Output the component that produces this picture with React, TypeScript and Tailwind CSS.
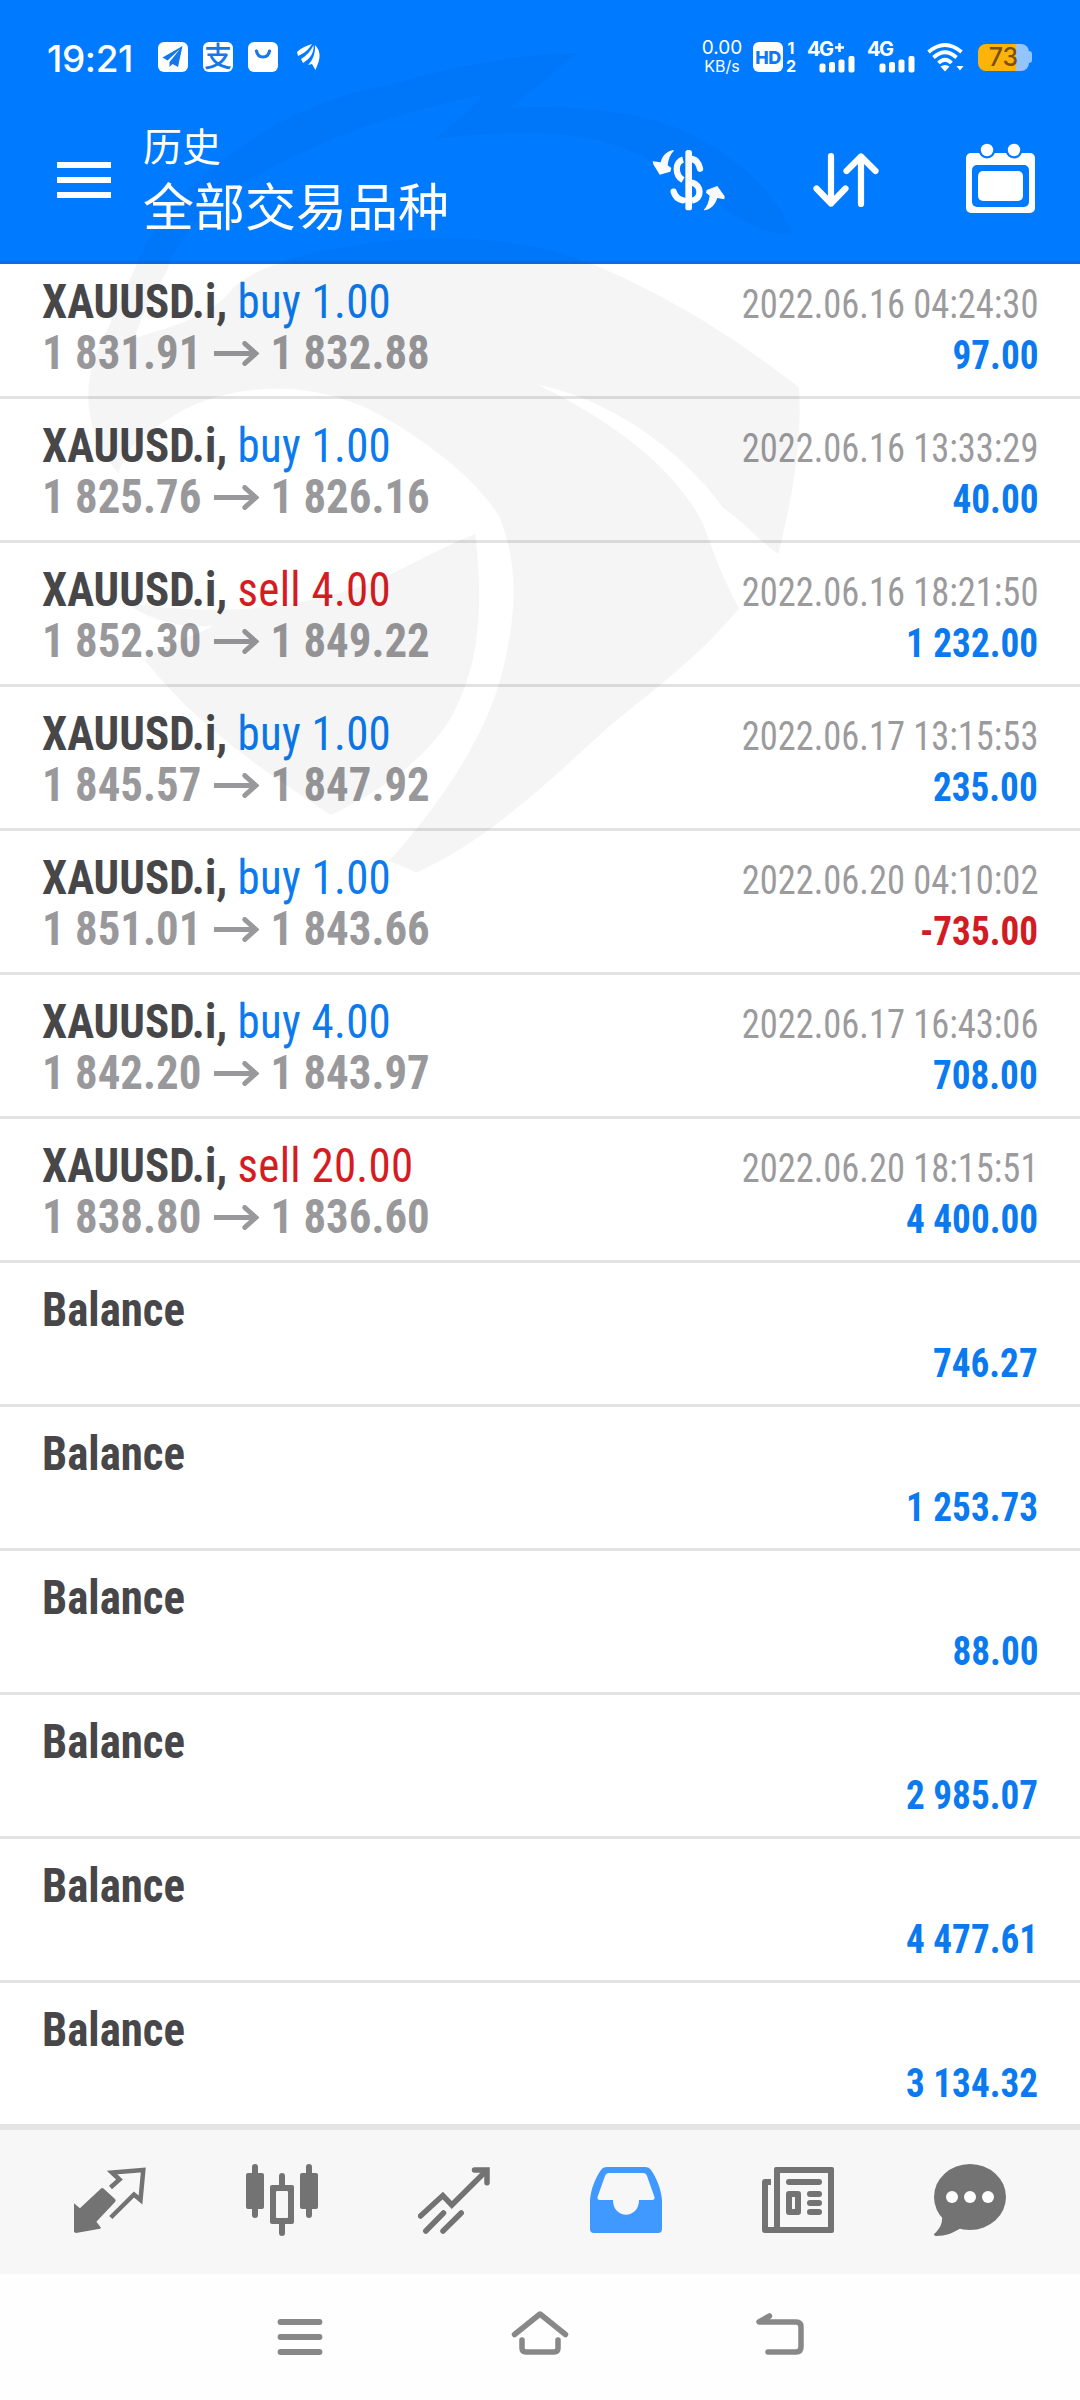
import type { ReactNode } from "react";

interface Deal {
  side: "buy" | "sell";
  volume: string;
  open: string;
  close: string;
  time: string;
  profit: string;
}

const SYMBOL = "XAUUSD.i,";

const deals: Deal[] = [
  { side: "buy", volume: "1.00", open: "1 831.91", close: "1 832.88", time: "2022.06.16 04:24:30", profit: "97.00" },
  { side: "buy", volume: "1.00", open: "1 825.76", close: "1 826.16", time: "2022.06.16 13:33:29", profit: "40.00" },
  { side: "sell", volume: "4.00", open: "1 852.30", close: "1 849.22", time: "2022.06.16 18:21:50", profit: "1 232.00" },
  { side: "buy", volume: "1.00", open: "1 845.57", close: "1 847.92", time: "2022.06.17 13:15:53", profit: "235.00" },
  { side: "buy", volume: "1.00", open: "1 851.01", close: "1 843.66", time: "2022.06.20 04:10:02", profit: "-735.00" },
  { side: "buy", volume: "4.00", open: "1 842.20", close: "1 843.97", time: "2022.06.17 16:43:06", profit: "708.00" },
  { side: "sell", volume: "20.00", open: "1 838.80", close: "1 836.60", time: "2022.06.20 18:15:51", profit: "4 400.00" },
];

const balances = ["746.27", "1 253.73", "88.00", "2 985.07", "4 477.61", "3 134.32"];

function SignalBars() {
  return (
    <svg width="36" height="17" viewBox="0 0 36 17" fill="#fff">
      <rect x="0.5" y="7.5" width="6" height="9" rx="2" />
      <rect x="10" y="6" width="6" height="10.5" rx="2" />
      <rect x="19.5" y="3.5" width="6" height="13" rx="2" />
      <rect x="29.5" y="0" width="6" height="16.5" rx="2" />
    </svg>
  );
}

function StatusBar() {
  return (
    <div className="flex h-[114px] items-center pl-[47px] pr-12 font-['Inter','Noto_Sans_CJK_SC',sans-serif] text-white">
      <span className="mt-1 w-[111px] whitespace-nowrap text-[37px] font-medium leading-[44px] tracking-[-0.4px]">19:21</span>
      <div className="flex items-center gap-[15px]">
        <svg width="30" height="30" viewBox="0 0 30 30">
          <rect width="30" height="30" rx="6" fill="#fff" />
          <path d="M24.5 4 L4.5 15.5 L9.5 18.5 L22 7 L11.5 20 L11.5 25 L14.5 22 L20 25 Z" fill="#1478e8" />
        </svg>
        <span className="flex size-[30px] items-center justify-center rounded-md bg-white text-[28px] font-medium leading-[30px] text-[#1478e8]">
          支
        </span>
        <svg width="30" height="30" viewBox="0 0 30 30">
          <rect width="30" height="30" rx="6" fill="#fff" />
          <path d="M8.5 9 C10 17 20 17 21.5 9" fill="none" stroke="#1478e8" strokeWidth="3.2" strokeLinecap="round" />
        </svg>
        <svg className="ml-1" width="24" height="28" viewBox="0 0 24 28" fill="#fff">
          <path d="M0 9 C4 5 9 3 15 1 C12 6 8 10 1 13 Z" />
          <path d="M4 16 C9 13 14 8 16.5 2 C17.500 9 13 16 6 20 Z" />
          <path d="M11 22 C16 17 18.500 10 18 2 C23 7 23.500 13 21.5 19 L18.500 27 L15 21 Z" />
        </svg>
      </div>

      <div className="ml-auto flex items-center">
        <div className="flex w-[40px] flex-col items-center whitespace-nowrap">
          <span className="text-[19px] leading-[16px]">0.00</span>
          <span className="mt-[2px] text-[16px] leading-[16px]">KB/s</span>
        </div>
        <span className="ml-[11px] flex size-[30px] items-center justify-center rounded-md bg-white text-[18px] font-extrabold tracking-tight text-[#0b79f2]">
          HD
        </span>
        <div className="ml-[2px] flex w-3 flex-col items-center gap-[3px] text-[16px] font-bold leading-[15px]">
          <span>1</span>
          <span>2</span>
        </div>
        <div className="ml-[10px] flex h-[31px] w-[48px] flex-col">
          <span className="flex h-[14px] items-start whitespace-nowrap text-[20px] font-bold leading-[15px] tracking-[-1.5px]">
            4G
            <svg className="ml-[2px] mt-[1px]" width="9" height="9" viewBox="0 0 9 9" stroke="#fff" strokeWidth="2.500">
              <path d="M4.500 0 V9 M0 4.500 H9" />
            </svg>
          </span>
          <div className="self-end">
            <SignalBars />
          </div>
        </div>
        <div className="ml-[12px] flex h-[31px] w-[48px] flex-col">
          <span className="h-[14px] whitespace-nowrap text-[20px] font-bold leading-[15px] tracking-[-1.5px]">4G</span>
          <div className="self-end">
            <SignalBars />
          </div>
        </div>
        <svg className="ml-[12px]" width="37" height="30" viewBox="0 0 37 30">
          <g fill="none" stroke="#fff" strokeWidth="3.800">
            <path d="M1.500 10 Q18 -4 34.500 10" />
            <path d="M6.500 15.500 Q18 5 29.500 15.500" />
            <path d="M11.500 21 Q18 14.500 24.500 21" />
          </g>
          <path d="M13.500 24.500 Q18 21.500 22.500 24.500 L18 29.500 Z" fill="#fff" />
          <path d="M29.500 24 H36.500 L33 28.500 Z" fill="#fff" />
        </svg>
        <div className="ml-[14px] flex items-center">
          <div className="flex h-[27px] w-[51px] items-center justify-center rounded-lg bg-[linear-gradient(90deg,#fdb30a_0_38px,#93c4fc_38px)] text-[25px] font-medium leading-[27px] text-[#7a4f12]">
            73
          </div>
          <span className="h-3 w-[3px] rounded-r bg-[#93c4fc]" />
        </div>
      </div>
    </div>
  );
}

function AppBar() {
  return (
    <div className="flex h-[147px] items-start pl-[57px] pr-[45px]">
      <div className="mt-12 flex w-[54px] flex-col gap-[9px]">
        <span className="h-[6px] bg-white" />
        <span className="h-[6px] bg-white" />
        <span className="h-[6px] bg-white" />
      </div>
      <div className="ml-[32px] flex flex-col whitespace-nowrap font-['Noto_Sans_CJK_SC',sans-serif] font-normal text-white">
        <span className="text-[39px] leading-[60px]">历史</span>
        <span className="text-[51px] leading-[60px]">全部交易品种</span>
      </div>

      <svg className="ml-auto mt-[35px]" width="74" height="62" viewBox="40 56 222 186">
        <g fill="none" stroke="#fff" strokeWidth="19">
          <path d="M133 88 C109 94 107 134 133 149" />
          <path d="M160 86 C173 88 180 98 184 115" strokeLinecap="round" />
          <path d="M160 157 C190 164 190 206 160 211" />
          <path d="M133 210 C116 206 108 196 105 184" strokeLinecap="round" />
        </g>
        <path d="M158 146 L172 156 L158 170 Z" fill="#fff" />
        <rect x="140" y="59" width="20" height="181" rx="8" fill="#fff" />
        <path d="M105 59 C86 62 71 74 66 96 L42 93 L44 102 L63 133 L95 124 L98 113 L87 105 C89 86 95 72 105 62 Z" fill="#fff" />
        <path d="M195 240 C205 228 211 214 213 196 L202 187 L204 179 L236 167 L258 198 L257 207 L236 203 C229 224 216 237 198 240 Z" fill="#fff" />
      </svg>

      <svg className="ml-[86px] mt-[36px]" width="68" height="60" viewBox="0 0 68 60" fill="none" stroke="#fff" strokeWidth="6.200" strokeLinecap="round" strokeLinejoin="round">
        <path d="M19 6 V53.500 M4.500 38.500 L19 53.500 L33.500 38.500" />
        <path d="M49 54 V6.500 M34.500 21 L49 6.500 L63.500 21" />
      </svg>

      <svg className="ml-[86px] mt-[29px]" width="69" height="71" viewBox="0 0 69 71">
        <rect y="10" width="69" height="60" rx="5" fill="#fff" />
        <rect x="6" y="22" width="57" height="42" rx="5" fill="#007aff" />
        <rect x="12" y="28" width="45" height="30" rx="5" fill="#fff" />
        <circle cx="21" cy="7" r="8.500" fill="#007aff" />
        <circle cx="48" cy="7" r="8.500" fill="#007aff" />
        <circle cx="21" cy="7" r="6.200" fill="#fff" />
        <circle cx="48" cy="7" r="6.200" fill="#fff" />
      </svg>
    </div>
  );
}

function Row({ left, time, profit }: { left: ReactNode; time?: string; profit: string }) {
  return (
    <li className="flex h-[144px] shrink-0 justify-between whitespace-nowrap border-b-[3px] border-[#e2e2e2] pl-[42px] pr-[42px]">
      <div className="flex flex-col pt-[21px] text-[48px] leading-[51px]">{left}</div>
      <div className="flex flex-col items-end pt-6 text-[40px] leading-[51px]">
        <span className="h-[51px] origin-right scale-x-[0.912] text-[#9b9b9e]">{time}</span>
        <span
          className={`origin-right scale-x-[0.93] font-bold ${profit.startsWith("-") ? "text-[#d01c22]" : "text-[#0a7aee]"}`}
        >
          {profit}
        </span>
      </div>
    </li>
  );
}

function DealRow({ deal }: { deal: Deal }) {
  return (
    <Row
      time={deal.time}
      profit={deal.profit}
      left={
        <>
          <div className="origin-left scale-x-[0.936]">
            <span className="font-bold text-[#47474a]">{SYMBOL}</span>{" "}
            <span className={`tracking-[0.3px] ${deal.side === "buy" ? "text-[#0a7aee]" : "text-[#d41c22]"}`}>
              {deal.side} {deal.volume}
            </span>
          </div>
          <div className="flex origin-left scale-x-[0.934] items-center font-bold text-[#99999c]">
            <span>{deal.open}</span>
            <svg className="ml-[13px] mr-[12px] mt-[2px]" width="49" height="25" viewBox="0 0 49 25" fill="none" stroke="#99999c" strokeWidth="5">
              <path d="M0 12.500 H45" />
              <path d="M33 2.500 L45 12.500 L33 22.500" strokeLinecap="round" />
            </svg>
            <span>{deal.close}</span>
          </div>
        </>
      }
    />
  );
}

/** Faint bird mark that lies over the header and the first rows. */
function Watermark() {
  return (
    <svg
      className="pointer-events-none absolute left-0 top-0 h-[900px] w-[1080px]"
      viewBox="0 0 1568 1568"
      preserveAspectRatio="none"
      fill="url(#mark)"
    >
      <defs>
        {/* weaker over the blue header than over the list */}
        <linearGradient id="mark" gradientUnits="userSpaceOnUse" x1="0" y1="0" x2="0" y2="1568">
          <stop offset="0.293" stopColor="#000" stopOpacity="0.028" />
          <stop offset="0.293" stopColor="#000" stopOpacity="0.04" />
        </linearGradient>
      </defs>
      <path d="M195 470 C240 330 400 180 560 150 C660 115 750 95 840 92 C800 130 770 160 740 188 C850 180 960 200 1020 245 C1080 285 1130 340 1150 410 C1110 405 1080 390 1050 360 C980 290 900 240 800 232 C740 228 680 235 630 242 C660 215 685 190 700 165 C560 200 420 260 330 340 C285 380 255 420 243 470 C225 510 205 550 195 590 C240 570 300 560 340 500 C370 470 400 460 440 445 C580 405 740 400 860 460 C980 520 1080 600 1160 675 C1165 770 1150 870 1130 965 C1100 940 1085 915 1050 885 C1000 800 900 700 780 670 C900 740 980 820 1020 910 C1035 960 1050 1010 1073 1060 C1010 1150 950 1200 880 1270 C790 1370 700 1470 605 1520 L565 1500 C640 1400 700 1290 725 1190 C750 1080 755 990 725 900 C690 830 600 750 530 710 C430 655 310 675 245 730 C195 765 180 790 172 825 C110 740 125 640 150 590 Z" />
      <path d="M690 930 C705 1080 690 1180 650 1260 C610 1330 550 1380 480 1420 C380 1340 290 1270 210 1150 C240 1120 280 1110 310 1090 C240 1095 210 1070 180 1050 C350 1080 470 1050 560 1005 C610 975 650 950 690 930 Z" />
    </svg>
  );
}

function TabBar() {
  return (
    <nav className="grid h-[150px] grid-cols-6 border-t-[6px] border-[#e4e4e4] bg-[#f7f7f7] px-6">
      {/* quotes */}
      <svg className="mx-auto mt-[34px] size-[72px]" viewBox="0 0 72 72">
        <path d="M0 39.300 L5.900 44.300 L26.500 25 Q28.300 23.200 30 25 L41 35 Q42.500 36.500 41 38 L22.400 57.700 L27 63.700 L26 64.800 L2 69 L0 68 Z" fill="#737373" />
        <path d="M36.500 23.500 L45.500 15.500 L38 8.500 L69.300 6 L66.500 36 L60 30.500 L36.800 53.500" fill="none" stroke="#737373" strokeWidth="4.500" />
      </svg>
      {/* chart */}
      <svg className="mx-auto mt-[34px] size-[72px]" viewBox="0 0 72 72" fill="#737373">
        <rect x="6" width="6" height="54" rx="3" />
        <rect y="9" width="18" height="36" rx="2" />
        <rect x="33" y="9" width="6" height="63" rx="3" />
        <rect x="24" y="21" width="24" height="39" rx="2" />
        <rect x="30" y="27" width="12" height="27" rx="1" fill="#f7f7f7" />
        <rect x="60" width="6" height="54" rx="3" />
        <rect x="54" y="9" width="18" height="36" rx="2" />
      </svg>
      {/* trade */}
      <svg className="mx-auto mt-[34px] size-[72px]" viewBox="0 0 72 72" fill="none" stroke="#737373" strokeWidth="5.500" strokeLinecap="round">
        <path d="M2.500 52 L24.800 31.500 L33.800 41 L68 7" />
        <path d="M56.500 6 H69 V18.700" />
        <path d="M7.800 67 L25.500 49 M25 67 L43.200 49" />
      </svg>
      {/* history, active */}
      <svg className="mx-auto mt-[34px] size-[72px]" viewBox="0 0 72 72">
        <path
          fillRule="evenodd"
          fill="#4099ff"
          d="M0 36 C1 24 6 13 11 6 Q13 3 17 3 H55 Q59 3 61 6 C66 13 71 24 72 36 V65 Q72 69 68 69 H4 Q0 69 0 65 Z M19 9 Q16 9 15 12 L7.500 33 Q7 36 10 36 H23 C23 55.500 49 55.500 49 36 H62 Q65 36 64.500 33 L57 12 Q56 9 53 9 Z"
        />
      </svg>
      {/* news */}
      <svg className="mx-auto mt-[34px] size-[72px]" viewBox="0 0 72 72" fill="#737373">
        <path fillRule="evenodd" d="M14 3 H70 Q72 3 72 5 V67 Q72 69 70 69 H3 Q0 69 0 66 V18 Q0 15 3 15 H9 V21 H6 V63 H12 V5 Q12 3 14 3 Z M18 9 V63 H66 V9 Z" />
        <rect x="24" y="15" width="36" height="6" rx="3" />
        <path fillRule="evenodd" d="M27 27 H36 Q39 27 39 30 V48 Q39 51 36 51 H27 Q24 51 24 48 V30 Q24 27 27 27 Z M30 33 V45 H33 V33 Z" />
        <rect x="45" y="27" width="15" height="6" rx="3" />
        <rect x="45" y="36" width="15" height="6" rx="3" />
        <rect x="45" y="45" width="15" height="6" rx="3" />
      </svg>
      {/* messages */}
      <svg className="mx-auto mt-[34px] size-[72px]" viewBox="0 0 72 72">
        <ellipse cx="36" cy="33" rx="36" ry="33" fill="#737373" />
        <path d="M8 51 C9 60 5 66 0 70 Q0 72 2 72 C12 72 19 69 27 64 Z" fill="#737373" />
        <circle cx="18" cy="33" r="6" fill="#fff" />
        <circle cx="36" cy="33" r="6" fill="#fff" />
        <circle cx="54" cy="33" r="6" fill="#fff" />
      </svg>
    </nav>
  );
}

function SystemNav() {
  return (
    <div className="grid h-[126px] grid-cols-3 bg-[#fefefe] px-[180px] pt-9">
      <svg className="mx-auto" width="60" height="50" viewBox="0 0 60 50" stroke="#888" strokeWidth="5.800" strokeLinecap="round">
        <path d="M10.500 12 H49.500 M10.500 27 H49.500 M10.500 42 H49.500" />
      </svg>
      <svg className="mx-auto" width="60" height="50" viewBox="0 0 60 50" fill="none" stroke="#888" strokeWidth="5.500" strokeLinecap="round" strokeLinejoin="round">
        <path d="M4.500 24.500 L30 4 L55.500 24.500" />
        <path d="M12 30 V38 Q12 42 16 42 H44 Q48 42 48 38 V30" />
      </svg>
      <svg className="mx-auto" width="60" height="50" viewBox="0 0 60 50" fill="none" stroke="#888" strokeWidth="5.500" strokeLinecap="round" strokeLinejoin="round">
        <path d="M19.500 6 L9 12 H46 Q51 12 51 17 V37 Q51 42 46 42 H18" />
      </svg>
    </div>
  );
}

export default function App() {
  return (
    <div className="relative flex h-[2400px] w-[1080px] flex-col overflow-hidden bg-white font-['Roboto_Condensed','Roboto','Liberation_Sans',sans-serif]">
      <header className="h-[264px] border-b-[3px] border-[#0b6de0] bg-[#007aff]">
        <StatusBar />
        <AppBar />
      </header>

      {/* the list is scrolled by a few pixels, so the first row is cut at its top */}
      <main className="h-[1860px] overflow-hidden">
        <ul className="-mt-[9px] flex flex-col">
          {deals.map((deal) => (
            <DealRow key={deal.time} deal={deal} />
          ))}
          {balances.map((amount) => (
            <Row
              key={amount}
              profit={amount}
              left={<span className="origin-left scale-x-[0.935] font-bold text-[#47474a]">Balance</span>}
            />
          ))}
        </ul>
      </main>

      <TabBar />
      <SystemNav />
      <Watermark />
    </div>
  );
}
